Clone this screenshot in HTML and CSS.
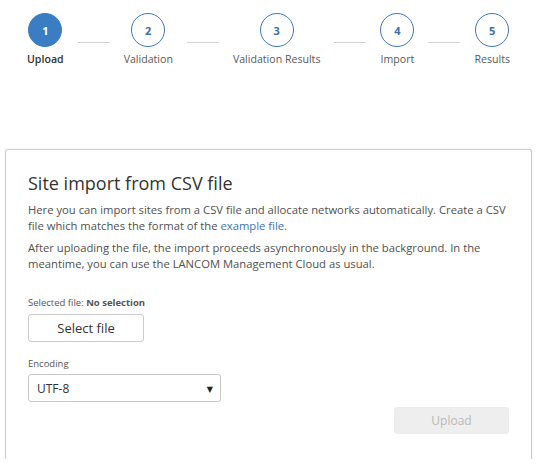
FILE: index.html
```html
<!DOCTYPE html>
<html lang="en">
<head>
<meta charset="utf-8">
<title>Site import from CSV file</title>
<link rel="stylesheet" href="styles.css">
</head>
<body>
<div class="stepper">
  <div class="step active"><div class="circle">1</div><div class="label">Upload</div></div>
  <div class="connector"></div>
  <div class="step"><div class="circle">2</div><div class="label">Validation</div></div>
  <div class="connector"></div>
  <div class="step"><div class="circle">3</div><div class="label">Validation Results</div></div>
  <div class="connector"></div>
  <div class="step"><div class="circle">4</div><div class="label">Import</div></div>
  <div class="connector"></div>
  <div class="step"><div class="circle">5</div><div class="label">Results</div></div>
</div>

<div class="card">
  <h1 class="title">Site import from CSV file</h1>
  <p class="text">Here you can import sites from a CSV file and allocate networks automatically. Create a CSV file which matches the format of the <a class="link" href="#">example file.</a></p>
  <p class="text">After uploading the file, the import proceeds asynchronously in the background. In the meantime, you can use the LANCOM Management Cloud as usual.</p>

  <div class="field-label first">Selected file: <b>No selection</b></div>
  <button class="btn select-btn" type="button">Select file</button>

  <div class="field-label enc">Encoding</div>
  <div class="select"><span>UTF-8</span><span class="arrow">&#9660;</span></div>

  <div class="actions">
    <button class="btn upload-btn" type="button" disabled>Upload</button>
  </div>
</div>
</body>
</html>
```

FILE: styles.css
```css
html, body {
  margin: 0;
  padding: 0;
  background: #ffffff;
}
body {
  font-family: "Open Sans", "DejaVu Sans", sans-serif;
  color: #444;
}
.stepper {
  display: flex;
  align-items: flex-start;
  padding: 13px 0 0 27px;
  width: 483px;
}
.step {
  display: flex;
  flex-direction: column;
  align-items: center;
}
.circle {
  width: 32px;
  height: 32px;
  border: 1px solid #3d76b8;
  border-radius: 50%;
  display: flex;
  align-items: center;
  justify-content: center;
  font-size: 11px;
  font-weight: 700;
  color: #3d6ea9;
  box-sizing: content-box;
}
.step.active .circle {
  background: #3a7dc2;
  border-color: #3a7dc2;
  color: #ffffff;
}
.label {
  margin-top: 5px;
  font-size: 10.6px;
  line-height: 15px;
  color: #595959;
  white-space: nowrap;
}
.step.active .label {
  color: #333;
  font-weight: 600;
}
.connector {
  flex: 1;
  height: 1px;
  background: #cfd3d6;
  margin: 29px 14px 0;
}
.card {
  margin: 82px 0 0 5px;
  width: 481px;
  height: 288px;
  padding: 21px 22px 0;
  border: 1px solid #cccccc;
  border-bottom: none;
  border-radius: 3px 3px 0 0;
  box-shadow: 0 0 2px rgba(0,0,0,0.08);
}
.title {
  margin: 0;
  font-size: 18px;
  line-height: 24px;
  font-weight: 400;
  color: #333;
}
.text {
  margin: 7px 0 0;
  font-size: 11.25px;
  line-height: 15.5px;
  color: #505050;
}
.link {
  color: #3d72b4;
  text-decoration: none;
}
.field-label {
  font-size: 9.5px;
  line-height: 14px;
  color: #555;
}
.field-label b {
  font-weight: 700;
  color: #555;
}
.field-label.first {
  margin-top: 25px;
}
.btn {
  font-family: "Open Sans", "DejaVu Sans", sans-serif;
  display: block;
  border-radius: 3px;
  box-sizing: border-box;
  padding: 0;
}
.select-btn {
  margin-top: 4px;
  width: 116px;
  height: 28px;
  border: 1px solid #cccccc;
  background: #ffffff;
  color: #333;
  font-size: 13px;
}
.field-label.enc {
  margin-top: 15px;
}
.select {
  margin-top: 3px;
  width: 193px;
  height: 28px;
  box-sizing: border-box;
  border: 1px solid #c8c8c8;
  border-radius: 3px;
  display: flex;
  align-items: center;
  justify-content: space-between;
  padding: 0 7px 0 8px;
  font-size: 12px;
  color: #333;
}
.arrow {
  font-size: 8px;
  color: #222;
}
.actions {
  display: flex;
  justify-content: flex-end;
  margin-top: 5px;
}
.upload-btn {
  width: 115px;
  height: 27px;
  border: 1px solid #ececec;
  background: #eeeeee;
  color: #b9b9b9;
  font-size: 12px;
}
```
